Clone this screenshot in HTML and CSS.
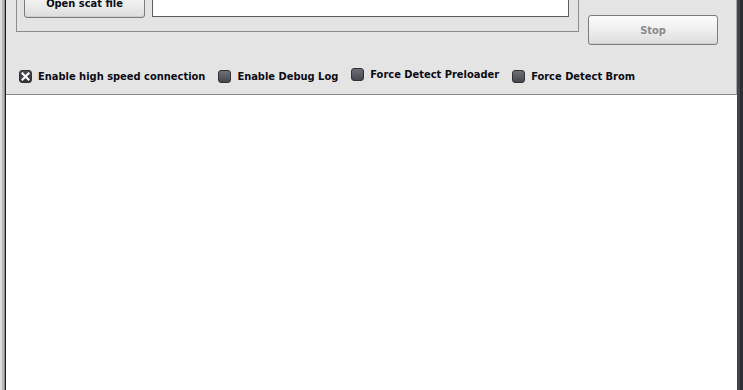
FILE: index.html
```html
<!DOCTYPE html>
<html>
<head>
<meta charset="utf-8">
<link rel="stylesheet" href="styles.css">
</head>
<body>
<div class="window">
  <div class="edge-left"></div>
  <div class="main">
    <div class="panel">
      <div class="top-row">
        <div class="group">
          <button class="btn open">Open scat file</button>
          <div class="field"></div>
        </div>
        <button class="btn stop">Stop</button>
      </div>
      <div class="options">
        <label class="opt"><span class="cb checked"><svg width="9" height="9" viewBox="0 0 9 9"><path d="M1.5 1.5 L7.5 7.5 M7.5 1.5 L1.5 7.5" stroke="#fff" stroke-width="2.2" stroke-linecap="square"/></svg></span>Enable high speed connection</label>
        <label class="opt"><span class="cb"></span>Enable Debug Log</label>
        <label class="opt raised"><span class="cb"></span>Force Detect Preloader</label>
        <label class="opt"><span class="cb"></span>Force Detect Brom</label>
      </div>
    </div>
    <div class="log"></div>
  </div>
  <div class="edge-right"></div>
</div>
</body>
</html>
```

FILE: styles.css
```css
html, body {
  margin: 0;
  padding: 0;
  background: #ffffff;
}

.window {
  display: flex;
  width: 743px;
  height: 390px;
  overflow: hidden;
  font-family: "DejaVu Sans Condensed", "DejaVu Sans", sans-serif;
  font-stretch: condensed;
  font-weight: bold;
  font-size: 11px;
  color: #0c0c14;
}

.edge-left {
  width: 6px;
  flex: none;
  background: linear-gradient(to right, #dcdcdc 0 2px, #b4b9be 2px 4px, #8c8f92 4px 5px, #1c1c1e 5px 6px);
}

.edge-right {
  width: 6px;
  flex: none;
  background: linear-gradient(to right, #40454a 0 3px, #2b2e32 3px 6px);
}

.main {
  flex: 1;
  display: flex;
  flex-direction: column;
  min-width: 0;
}

.panel {
  height: 94px;
  background: #e4e4e4;
  border-bottom: 1px solid #8a8a8a;
  border-right: 1px solid #a8a8a8;
  padding-left: 10px;
  box-sizing: content-box;
}

.top-row {
  display: flex;
  align-items: flex-start;
  gap: 9px;
}

.group {
  display: flex;
  align-items: flex-start;
  gap: 7px;
  width: 563px;
  box-sizing: border-box;
  margin-top: -20px;
  border: 1px solid #8c8c8c;
  padding: 8px 9px 13px 7px;
}

.btn {
  font: inherit;
  font-stretch: condensed;
  box-sizing: border-box;
  border: 1px solid #7c7c7c;
  border-radius: 3px;
  background: linear-gradient(#fcfcfc, #eeeeee 50%, #dddddd);
  box-shadow: inset 0 -1px 0 #cfcfcf;
  padding: 0;
  margin: 0;
  color: #0c0c14;
}

.open {
  width: 121px;
  height: 29px;
  padding-top: 0;
}

.field {
  width: 417px;
  height: 27px;
  margin-top: 1px;
  box-sizing: border-box;
  background: #ffffff;
  border: 1px solid #5e5e5e;
}

.stop {
  width: 130px;
  height: 30px;
  margin-top: 15px;
  color: #8a8a8a;
}

.options {
  display: flex;
  align-items: center;
  margin-top: 24px;
  padding-left: 3px;
  height: 15px;
}

.opt {
  display: flex;
  align-items: center;
  gap: 6px;
  margin-right: 13px;
  line-height: 14px;
  white-space: nowrap;
}

.opt.raised {
  margin-bottom: 4px;
}

.cb {
  width: 13px;
  height: 13px;
  box-sizing: border-box;
  border-radius: 3px;
  border: 1px solid #2f3135;
  background: linear-gradient(#6c6f74, #45484c);
  display: flex;
  align-items: center;
  justify-content: center;
  flex: none;
}

.cb.checked {
  background: linear-gradient(#4a4c50, #303236);
}

.log {
  flex: 1;
  background: #ffffff;
}
```
